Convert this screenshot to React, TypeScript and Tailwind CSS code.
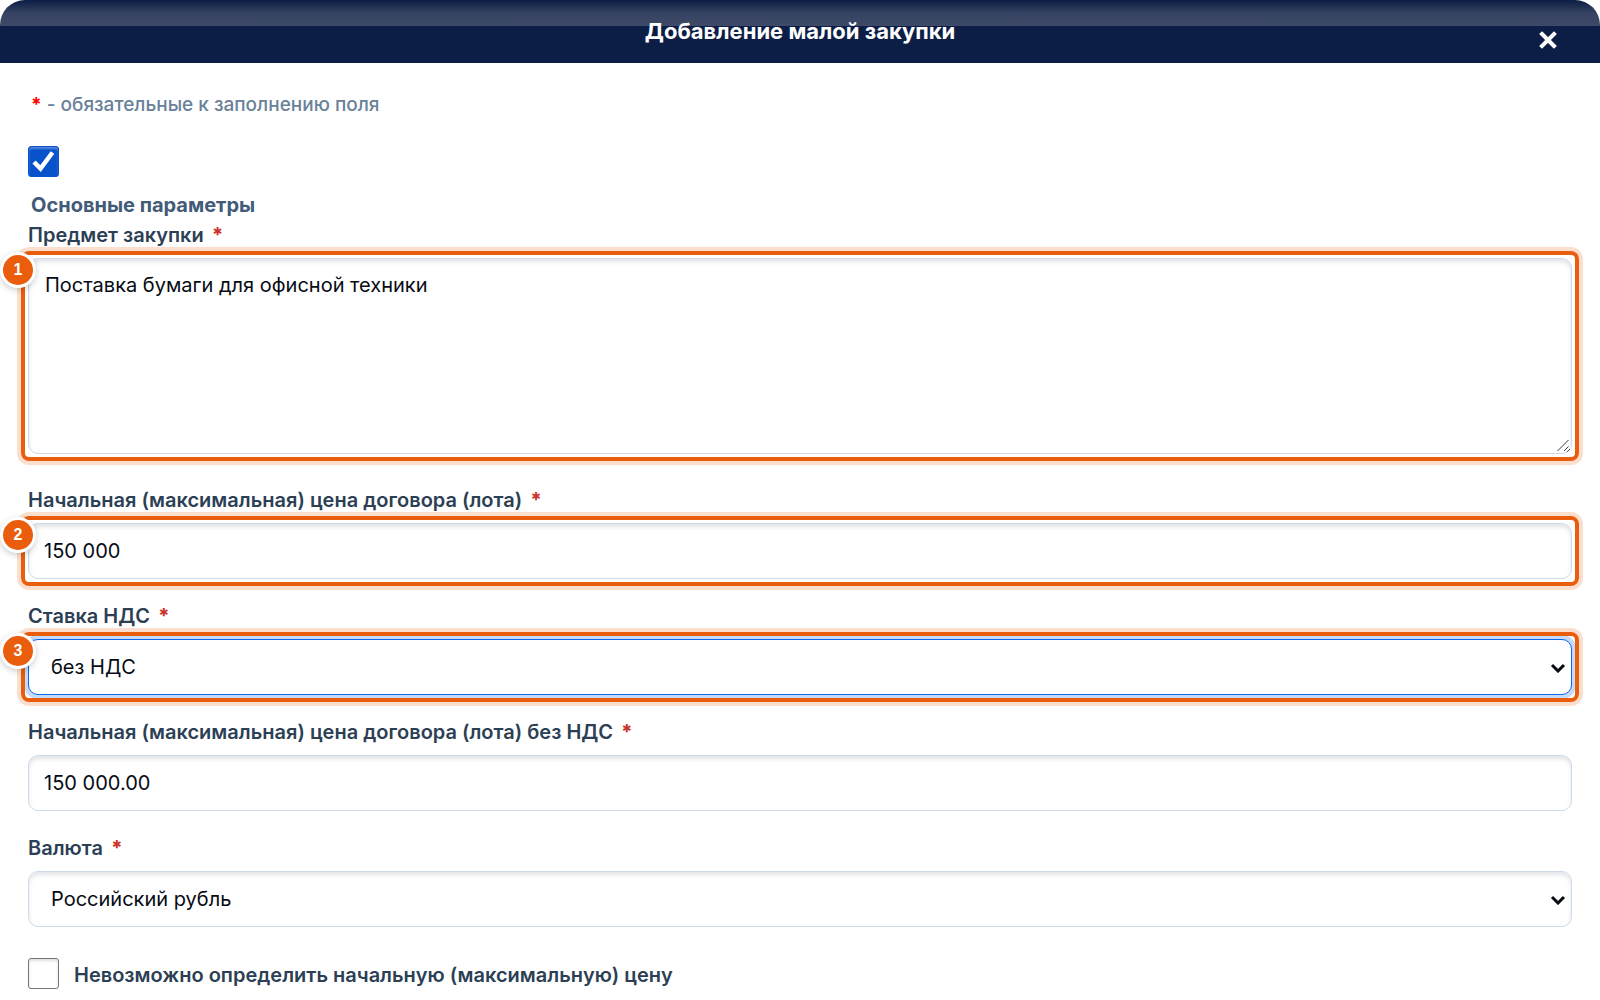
import type { FC, ReactNode } from "react";

const controlClass =
  "block w-full rounded-[10px] border bg-white text-xl font-normal text-[#070b14] outline-none";

const idleClass =
  "border-[#cfdbe8] shadow-[inset_0_3px_4px_rgba(20,30,60,0.12)]";

const Required: FC = () => (
  <span className="ml-2 font-extrabold text-[#c9352b]">*</span>
);

interface FieldProps {
  id: string;
  label: string;
  step?: number;
  children: ReactNode;
}

const Field: FC<FieldProps> = ({ id, label, step, children }) => (
  <div>
    <label
      htmlFor={id}
      className="mb-[9px] block text-xl leading-7 font-semibold text-[#2c3f55]"
    >
      {label}
      <Required />
    </label>
    <div className="relative">
      {children}
      {/* Step marker */}
      {step && (
        <div className="pointer-events-none absolute -inset-[7px] rounded-lg border-4 border-[#e95d0c] shadow-[0_0_0_4px_rgba(233,93,12,0.2)]">
          <span className="absolute -top-[3px] -left-[25px] flex size-9 items-center justify-center rounded-full border-3 border-white bg-[#e95d0c] font-['Liberation_Sans',sans-serif] text-base font-bold text-white shadow-[0_2px_6px_rgba(0,0,0,0.2)]">
            {step}
          </span>
        </div>
      )}
    </div>
  </div>
);

interface SelectProps {
  id: string;
  options: string[];
  active?: boolean;
}

const Select: FC<SelectProps> = ({ id, options, active }) => (
  <div className="relative">
    <select
      id={id}
      className={`${controlClass} h-14 appearance-none pr-10 pl-[22px] ${
        active ? "border-[#0d66e8] shadow-[0_0_0_4px_#c5daf9]" : idleClass
      }`}
    >
      {options.map((option) => (
        <option key={option}>{option}</option>
      ))}
    </select>
    <svg
      className="pointer-events-none absolute top-6 right-[6px] h-[10px] w-4"
      viewBox="0 0 16 10"
      fill="none"
      stroke="#070b14"
      strokeWidth="3"
    >
      <path d="M2 2l6 6 6-6" />
    </svg>
  </div>
);

export default function App() {
  return (
    <div className="bg-white font-['Inter','Noto_Sans',sans-serif]">
      {/* Header */}
      <header className="relative h-[63px] rounded-t-[25px] bg-[#0c1e45] bg-[linear-gradient(to_bottom,#0c1e45,#354362_50%,#3e4a67)] bg-[length:100%_26px] bg-no-repeat pt-4">
        <h1 className="text-center text-[22px] leading-[30px] font-bold text-white">
          Добавление малой закупки
        </h1>
        <button
          type="button"
          aria-label="Закрыть"
          className="absolute top-[30px] right-[42px]"
        >
          <svg
            className="size-5"
            viewBox="0 0 20 20"
            stroke="#fff"
            strokeWidth="4"
            strokeLinecap="square"
          >
            <path d="M4 4l12 12M16 4L4 16" />
          </svg>
        </button>
      </header>

      <form className="px-7">
        <p className="mt-7 pl-[3px] text-[19px] leading-7 font-medium text-[#698199]">
          <span className="font-bold text-[#ff0000]">*</span> - обязательные к
          заполнению поля
        </p>

        <div className="relative mt-[27px] size-[31px]">
          <input
            type="checkbox"
            id="main-params"
            defaultChecked
            className="peer block size-full appearance-none rounded-[3px] border border-[#767676] bg-white checked:border-[#0853cb] checked:bg-[#0853cb] checked:shadow-[inset_0_2px_2px_rgba(255,255,255,0.3)]"
          />
          <svg
            className="pointer-events-none absolute inset-0 hidden size-full peer-checked:block"
            viewBox="0 0 31 31"
            fill="none"
            stroke="#fff"
            strokeWidth="4.5"
          >
            <path d="M6 16l6.500 6.500L24.500 6.500" />
          </svg>
        </div>
        <label
          htmlFor="main-params"
          className="mt-3 block pl-[3px] text-xl leading-8 font-bold text-[#415b78]"
        >
          Основные параметры
        </label>

        <div className="flex flex-col gap-[23px]">
          <Field id="subject" label="Предмет закупки" step={1}>
            <textarea
              id="subject"
              defaultValue="Поставка бумаги для офисной техники"
              className={`${controlClass} ${idleClass} h-[196px] resize-y px-4 py-3 leading-7`}
            />
            {/* Resize grip */}
            <svg
              className="pointer-events-none absolute right-[2px] bottom-[2px] size-[13px]"
              viewBox="0 0 13 13"
              stroke="#3c3c3c"
            >
              <path d="M0 0h13v7l-6 6H0z" fill="#fff" stroke="none" />
              <path d="M0.500 12L11.500 1M7 12l4.500-4.500" />
            </svg>
          </Field>
          <div className="mt-[9px]">
            <Field
              id="price"
              label="Начальная (максимальная) цена договора (лота)"
              step={2}
            >
              <input
                id="price"
                type="text"
                defaultValue="150 000"
                className={`${controlClass} ${idleClass} h-14 px-[15px]`}
              />
            </Field>
          </div>
          <Field id="vat" label="Ставка НДС" step={3}>
            <Select id="vat" options={["без НДС"]} active />
          </Field>
          <Field
            id="price-net"
            label="Начальная (максимальная) цена договора (лота) без НДС"
          >
            <input
              id="price-net"
              type="text"
              defaultValue="150 000.00"
              className={`${controlClass} ${idleClass} h-14 px-[15px]`}
            />
          </Field>
          <Field id="currency" label="Валюта">
            <Select id="currency" options={["Российский рубль"]} />
          </Field>
        </div>

        <div className="mt-[30px] flex items-center gap-[15px]">
          <input
            type="checkbox"
            id="no-price"
            className="size-[31px] appearance-none rounded-[3px] border border-[#767676] bg-white shadow-[inset_0_2px_3px_rgba(0,0,0,0.12)] checked:bg-[#0853cb]"
          />
          <label
            htmlFor="no-price"
            className="pt-1 text-xl leading-7 font-semibold text-[#2c3f55]"
          >
            Невозможно определить начальную (максимальную) цену
          </label>
        </div>
      </form>
    </div>
  );
}
